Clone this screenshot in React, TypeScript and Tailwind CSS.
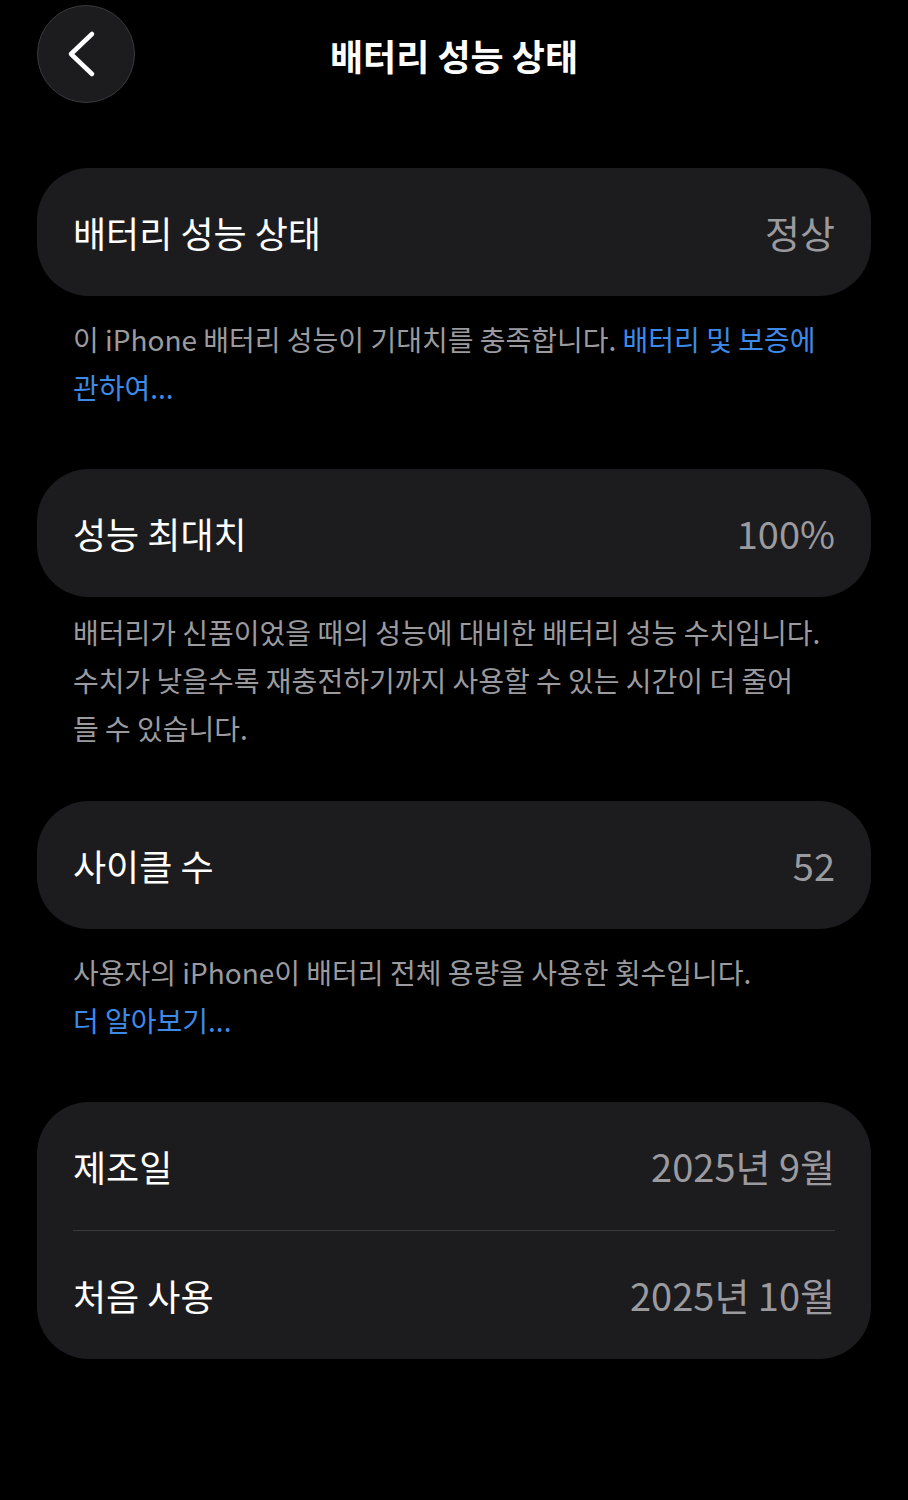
import React from "react";

const font = {
  fontFamily: '"Noto Sans CJK KR", "Noto Sans", sans-serif',
};

function BackButton() {
  return (
    <button className="flex h-[98px] w-[98px] items-center justify-center rounded-full border border-[#3a3a3c] bg-[#1c1c1e]">
      <svg width="40" height="50" viewBox="0 0 40 50" fill="none" className="ml-[-10px]">
        <path
          d="M31 5 L10 25 L31 45"
          stroke="#ffffff"
          strokeWidth="4.5"
          strokeLinecap="round"
          strokeLinejoin="round"
        />
      </svg>
    </button>
  );
}

function Row({ label, value }: { label: string; value: string }) {
  return (
    <div className="flex h-[128px] items-center justify-between">
      <span className="text-[36px] leading-none text-white">{label}</span>
      <span className="text-[38px] leading-none text-[#9a9a9f]">{value}</span>
    </div>
  );
}

function Card({ children }: { children: React.ReactNode }) {
  return <div className="rounded-[52px] bg-[#1c1c1e] px-[36px]">{children}</div>;
}

function Note({ lines }: { lines: React.ReactNode[] }) {
  return (
    <div className="px-[36px] text-[28px] leading-[48px] text-[#9b9b9f]">
      {lines.map((l, i) => (
        <div key={i} className="whitespace-nowrap">
          {l}
        </div>
      ))}
    </div>
  );
}

const blue = "text-[#3d8ae8]";

export default function App() {
  return (
    <div className="min-h-[1500px] w-[908px] bg-black" style={font}>
      <div className="relative flex h-[108px] items-start px-[37px] pt-[5px]">
        <BackButton />
        <h1 className="absolute left-0 right-0 top-[33px] text-center text-[36px] font-bold leading-[44px] text-white">
          배터리 성능 상태
        </h1>
      </div>

      <div className="px-[37px] pt-[60px]">
        <Card>
          <Row label="배터리 성능 상태" value="정상" />
        </Card>
        <div className="mt-[19px]">
          <Note
            lines={[
              <>
                이 iPhone 배터리 성능이 기대치를 충족합니다.{" "}
                <span className={blue}>배터리 및 보증에</span>
              </>,
              <span className={blue}>관하여...</span>,
            ]}
          />
        </div>

        <div className="mt-[58px]">
          <Card>
            <Row label="성능 최대치" value="100%" />
          </Card>
        </div>
        <div className="mt-[11px]">
          <Note
            lines={[
              "배터리가 신품이었을 때의 성능에 대비한 배터리 성능 수치입니다.",
              "수치가 낮을수록 재충전하기까지 사용할 수 있는 시간이 더 줄어",
              "들 수 있습니다.",
            ]}
          />
        </div>

        <div className="mt-[49px]">
          <Card>
            <Row label="사이클 수" value="52" />
          </Card>
        </div>
        <div className="mt-[19px]">
          <Note
            lines={[
              "사용자의 iPhone이 배터리 전체 용량을 사용한 횟수입니다.",
              <span className={blue}>더 알아보기...</span>,
            ]}
          />
        </div>

        <div className="mt-[58px]">
          <Card>
            <Row label="제조일" value="2025년 9월" />
            <div className="h-px bg-[#3a3a3c]" />
            <Row label="처음 사용" value="2025년 10월" />
          </Card>
        </div>
      </div>
    </div>
  );
}
